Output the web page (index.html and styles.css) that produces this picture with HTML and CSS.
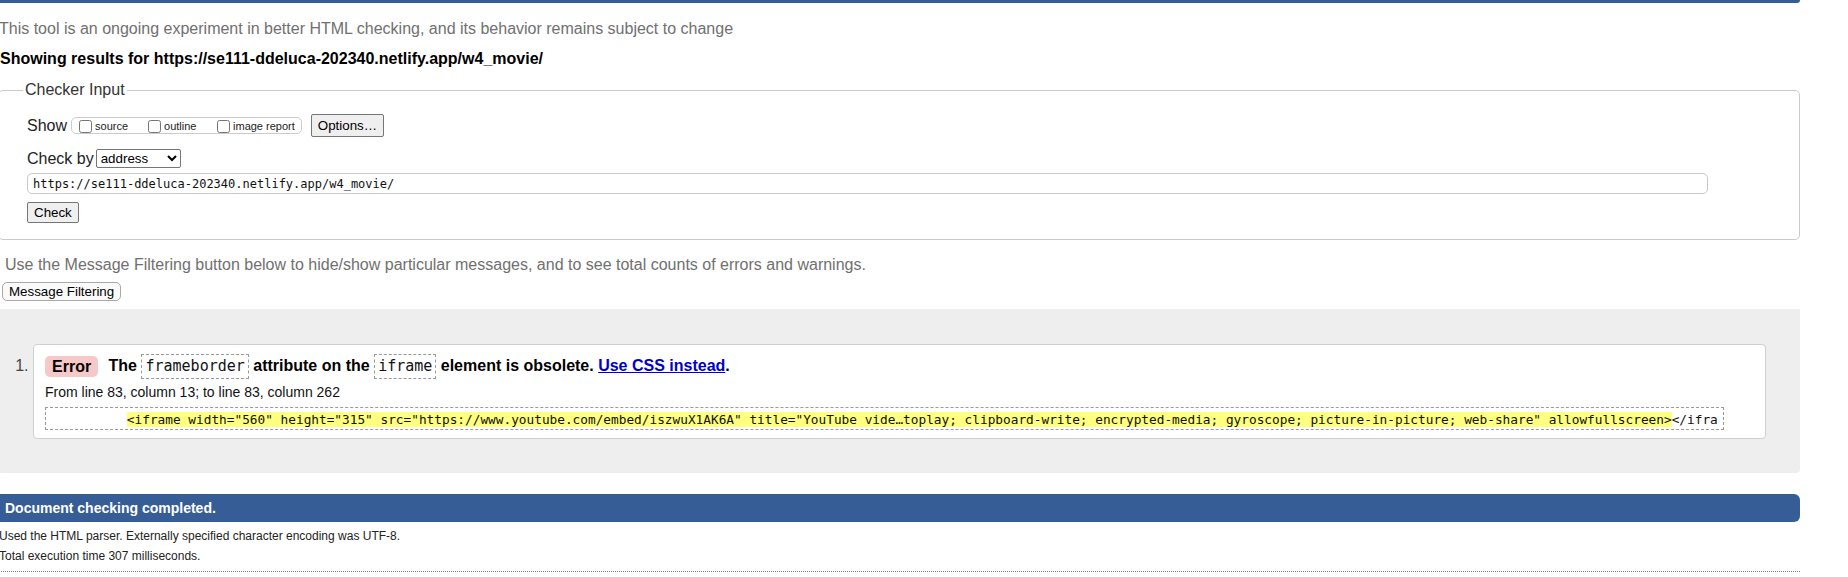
FILE: index.html
```html
<!DOCTYPE html>
<html lang="en">
<head>
<meta charset="utf-8">
<title>Nu Html Checker</title>
<link rel="stylesheet" href="styles.css">
</head>
<body>
<div class="page">
  <div class="topbar"></div>
  <p class="note">This tool is an ongoing experiment in better HTML checking, and its behavior remains subject to change</p>
  <p class="showing">Showing results for https://se111-ddeluca-202340.netlify.app/w4_movie/</p>
  <form class="checker-form">
    <fieldset class="checker">
      <legend>Checker Input</legend>
      <div class="row show-row">
        <span class="lbl">Show</span>
        <span class="opts">
          <label class="opt"><input type="checkbox">source</label>
          <label class="opt"><input type="checkbox">outline</label>
          <label class="opt last"><input type="checkbox">image report</label>
        </span>
        <button type="button" class="btn options">Options…</button>
      </div>
      <div class="row by-row">
        <span class="lbl">Check by</span>
        <select class="by"><option>address</option></select>
      </div>
      <div class="row url-row">
        <input class="url" type="text" value="https://se111-ddeluca-202340.netlify.app/w4_movie/">
      </div>
      <div class="row submit-row">
        <button type="button" class="btn check">Check</button>
      </div>
    </fieldset>
  </form>
  <p class="filter-note">Use the Message Filtering button below to hide/show particular messages, and to see total counts of errors and warnings.</p>
  <button type="button" class="filter-btn">Message Filtering</button>
  <div class="results">
    <ol class="messages">
      <li class="card">
        <p class="msg"><span class="badge">Error</span> The <code class="kw">frameborder</code> attribute on the <code class="kw">iframe</code> element is obsolete. <a href="#">Use CSS instead</a>.</p>
        <p class="location">From line 83, column 13; to line 83, column 262</p>
        <p class="extract"><code>          <mark>&lt;iframe width="560" height="315" src="https://www.youtube.com/embed/iszwuX1AK6A" title="YouTube vide…toplay; clipboard-write; encrypted-media; gyroscope; picture-in-picture; web-share" allowfullscreen&gt;</mark>&lt;/ifra</code></p>
      </li>
    </ol>
  </div>
  <p class="done">Document checking completed.</p>
  <p class="details first">Used the HTML parser. Externally specified character encoding was UTF-8.</p>
  <p class="details">Total execution time 307 milliseconds.</p>
  <div class="rule"></div>
</div>
</body>
</html>
```

FILE: styles.css
```css
* { box-sizing: border-box; }
html, body { margin: 0; padding: 0; background: #fff; }
body {
  font-family: "Liberation Sans", Arial, Helvetica, sans-serif;
  font-size: 16px;
  color: #000;
  overflow: hidden;
}
.page { width: 1802px; margin-left: -2px; }

.topbar {
  height: 3px;
  background: #365d95;
  border-bottom-right-radius: 4px;
}
.note {
  margin: 17px 0 0;
  padding-left: 1px;
  line-height: 18px;
  color: #707070;
}
.showing {
  margin: 12px 0 0;
  padding-left: 2px;
  line-height: 18px;
  font-weight: bold;
}

.checker-form { margin: 13px 0 0; }
.checker {
  margin: 0;
  padding: 0 28px 16px;
  border: 1px solid #cacaca;
  border-radius: 5px;
  min-width: 0;
}
.checker legend {
  margin-left: -4px;
  padding: 0 2px;
  line-height: 18px;
  color: #333;
}
.row { display: flex; align-items: center; }
.lbl { line-height: 18px; color: #222; }
.show-row { margin-top: 15px; height: 23px; }
.opts {
  display: flex;
  align-items: center;
  height: 17px;
  margin-left: 4px;
  padding: 1px 6px 0 7px;
  border: 1px solid #cccccc;
  border-radius: 5px;
}
.opt {
  display: flex;
  align-items: center;
  width: 69px;
  font-size: 11px;
  color: #222;
}
.opt.last { width: auto; }
.opt input { margin: 0 3px 0 0; width: 13px; height: 13px; }
.btn {
  font-family: "Liberation Sans", Arial, sans-serif;
  font-size: 13.333px;
  color: #000;
  background: #efefef;
  border: 1px solid #767676;
  border-radius: 2px;
  padding: 0 6px;
}
.options { margin-left: 9px; height: 23px; }
.by-row { margin-top: 12px; height: 19px; }
.by {
  margin-left: 2px;
  width: 85px;
  height: 19px;
  font-family: "Liberation Sans", Arial, sans-serif;
  font-size: 13.333px;
  color: #000;
  background: #fff;
  border: 1px solid #767676;
  border-radius: 2px;
}
.url-row { margin-top: 5px; }
.url {
  width: 1681px;
  height: 21px;
  padding: 0 5px;
  font-family: "DejaVu Sans Mono", "Liberation Mono", monospace;
  font-size: 12px;
  color: #111;
  border: 1px solid #c8c8c8;
  border-radius: 5px;
  background: #fff;
}
.submit-row { margin-top: 8px; }
.check { height: 21px; }

.filter-note {
  margin: 16px 0 0;
  padding-left: 7px;
  line-height: 18px;
  color: #707070;
}
.filter-btn {
  display: block;
  margin: 8px 0 0 4px;
  height: 19px;
  padding: 0 6px;
  font-family: "Liberation Sans", Arial, sans-serif;
  font-size: 13.333px;
  color: #000;
  background: #fafafa;
  border: 1px solid #a9a9a9;
  border-radius: 5px;
}

.results {
  margin-top: 8px;
  background: #eeeeee;
  border-radius: 0 0 4px 4px;
  padding: 35px 34px 34px 35px;
}
.messages { margin: 0; padding: 0; list-style: decimal; }
.card {
  background: #fff;
  border: 1px solid #cfcfcf;
  border-radius: 4px;
  padding: 8px 41px 8px 11px;
  color: #444;
}
.card::marker { color: #444; }
.msg {
  margin: 0;
  line-height: 25px;
  height: 25px;
  font-weight: bold;
  color: #000;
}
.badge {
  display: inline-block;
  vertical-align: middle;
  line-height: 21px;
  padding: 0 7px;
  margin-right: 6px;
  background: #f6c8c8;
  border-radius: 5px;
  color: #000;
}
.kw {
  display: inline-block;
  vertical-align: middle;
  line-height: 23px;
  padding: 0 3px;
  font-family: "DejaVu Sans Mono", "Liberation Mono", monospace;
  font-size: 15px;
  font-weight: normal;
  border: 1px dashed #9a9a9a;
  color: #111;
}
.msg a { color: #0000cc; text-decoration: underline; }
.location {
  margin: 6px 0 0;
  font-size: 14px;
  line-height: 17px;
  color: #111;
}
.extract {
  margin: 6px 0 0;
  height: 23px;
  border: 1px dashed #9a9a9a;
  padding-left: 4px;
  overflow: hidden;
  white-space: pre;
  line-height: 21px;
}
.extract code {
  font-family: "DejaVu Sans Mono", "Liberation Mono", monospace;
  font-size: 12.77px;
  color: #111;
}
.extract mark { background: #ffff80; color: #111; }

.done {
  margin: 21px 0 0;
  height: 28px;
  line-height: 28px;
  padding-left: 7px;
  background: #365d95;
  color: #fff;
  font-size: 14px;
  font-weight: bold;
  border-radius: 0 6px 6px 0;
}
.details {
  margin: 6px 0 0;
  padding-left: 1px;
  font-size: 12px;
  line-height: 14px;
  color: #222;
}
.details.first { margin-top: 7px; }
.rule {
  margin-top: 8px;
  border-bottom: 1px dotted #777;
}
```
